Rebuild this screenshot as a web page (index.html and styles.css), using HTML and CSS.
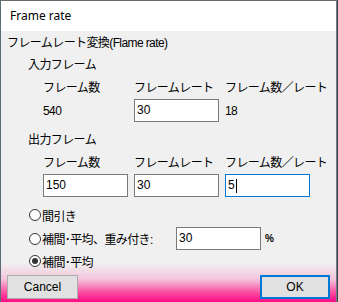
FILE: index.html
```html
<!DOCTYPE html>
<html lang="ja">
<head>
    <meta charset="UTF-8" />
    <title>Frame rate</title>
    <link rel="stylesheet" href="styles.css">
</head>
<body>
<div class="window">
    <div class="titlebar">Frame rate</div>

    <div class="content">
        <div class="heading">フレームレート変換(Flame rate)</div>

        <div class="group-title">入力フレーム</div>
        <div class="grid labels">
            <div>フレーム数</div>
            <div>フレームレート</div>
            <div>フレーム数／レート</div>
        </div>
        <div class="grid values">
            <div>540</div>
            <div><div class="field">30</div></div>
            <div>18</div>
        </div>

        <div class="group-title out">出力フレーム</div>
        <div class="grid labels">
            <div>フレーム数</div>
            <div>フレームレート</div>
            <div>フレーム数／レート</div>
        </div>
        <div class="grid values">
            <div><div class="field">150</div></div>
            <div><div class="field">30</div></div>
            <div><div class="field focused">5<span class="caret"></span></div></div>
        </div>

        <div class="options">
            <div class="radio-row first">
                <span class="radio"></span>
                <span>間引き</span>
            </div>
            <div class="radio-row weight">
                <span class="radio"></span>
                <span class="radio-label">補間･平均、重み付き:</span>
                <div class="field">30</div>
                <span class="percent">%</span>
            </div>
            <div class="radio-row">
                <span class="radio checked"></span>
                <span>補間･平均</span>
            </div>
        </div>

        <div class="buttons">
            <button class="btn">Cancel</button>
            <button class="btn btn-default">OK</button>
        </div>
    </div>
</div>
</body>
</html>
```

FILE: styles.css
```css
* {
    box-sizing: border-box;
    margin: 0;
    padding: 0;
}

body {
    width: 338px;
    height: 302px;
    background: #2e4a58;
    font-family: "Liberation Sans", "Noto Sans CJK JP", sans-serif;
    font-size: 12px;
    color: #000;
    overflow: hidden;
    white-space: nowrap;
}

.window {
    width: 337px;
    height: 302px;
    border-top: 1px solid #6b6b6b;
    border-left: 1px solid #5b6d74;
    border-right: 1px solid #7a7a7a;
    display: flex;
    flex-direction: column;
}

.titlebar {
    height: 30px;
    background: #fff;
    padding-left: 9px;
    line-height: 30px;
    font-family: "Noto Sans", "Open Sans", sans-serif;
    font-size: 12px;
}

.content {
    flex: 1;
    background: linear-gradient(to bottom, #f0f0f0 0, #f0f0f0 232px, #f3c6dc 248px, #f9489f 262px, #ff0a85 271px);
    display: flex;
    flex-direction: column;
    letter-spacing: -0.6px;
}

.heading {
    height: 24px;
    line-height: 24px;
    padding-left: 6px;
}

.group-title {
    height: 20px;
    line-height: 20px;
    padding-left: 27px;
}

.group-title.out {
    margin-top: 8px;
}

.grid {
    display: grid;
    grid-template-columns: 91px 91px 104px;
    padding-left: 42px;
    align-items: center;
}

.labels {
    height: 20px;
    line-height: 20px;
    margin-top: 3px;
}

.values {
    height: 23px;
    margin-top: 1px;
}

.field {
    width: 85px;
    height: 23px;
    background: #fff;
    border: 1px solid #7a7a7a;
    padding-left: 2px;
    line-height: 21px;
    display: flex;
    align-items: center;
    letter-spacing: 0;
}

.field.focused {
    border-color: #0078d7;
}

.caret {
    display: inline-block;
    width: 1px;
    height: 14px;
    background: #000;
    margin-left: 1px;
}

.options {
    margin-top: 8px;
    padding-left: 28px;
    display: flex;
    flex-direction: column;
}

.radio-row {
    display: flex;
    align-items: center;
    height: 20px;
}

.radio-row.weight {
    height: 23px;
    margin: 2px 0 1px;
}

.radio {
    width: 12px;
    height: 12px;
    border: 1px solid #333;
    border-radius: 50%;
    background: #fff;
    margin-right: 1px;
    display: flex;
    align-items: center;
    justify-content: center;
}

.radio.checked::after {
    content: "";
    width: 6px;
    height: 6px;
    border-radius: 50%;
    background: #333;
}

.radio-label {
    width: 134px;
}

.percent {
    margin-left: 4px;
    font-size: 10px;
    font-weight: bold;
}

.buttons {
    display: flex;
    justify-content: space-between;
    padding: 0 6px 0 6px;
    margin-top: 4px;
}

.btn {
    width: 71px;
    height: 24px;
    background: #e1e1e1;
    border: 1px solid #adadad;
    font-family: "Liberation Sans", sans-serif;
    font-size: 12px;
    color: #000;
}

.btn-default {
    width: 70px;
    border: 2px solid #0078d7;
}
```
